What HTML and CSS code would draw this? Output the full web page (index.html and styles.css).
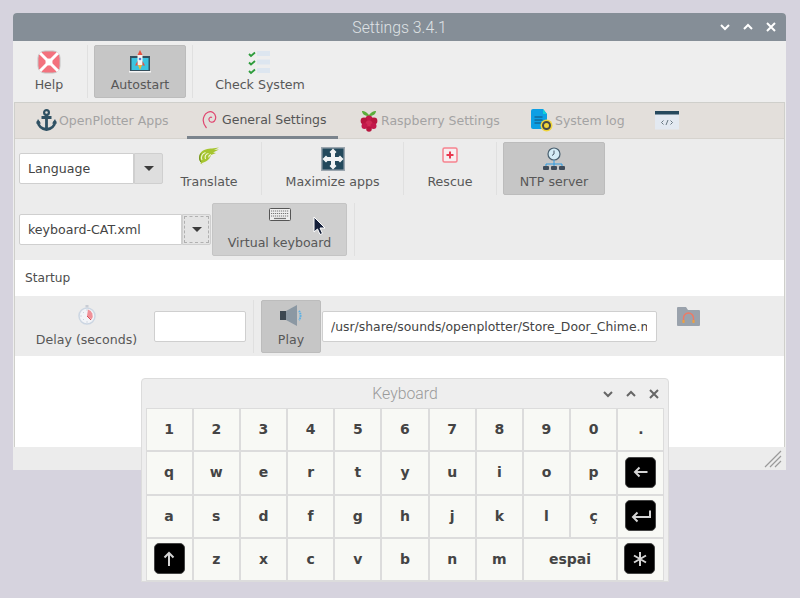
FILE: index.html
```html
<!DOCTYPE html>
<html lang="en">
<head>
  <meta charset="UTF-8">
  <title>Settings 3.4.1</title>
  <link rel="stylesheet" href="styles.css">
</head>
<body>

<div class="window settings-win">
  <div class="titlebar">
    <span class="win-title">Settings 3.4.1</span>
    <div class="win-btns">
      <svg width="12" height="12" viewBox="0 0 12 12"><path d="M2 4l4 4 4-4" /></svg>
      <svg width="12" height="12" viewBox="0 0 12 12"><path d="M2 8l4-4 4 4" /></svg>
      <svg width="12" height="12" viewBox="0 0 12 12"><path d="M2 2l8 8M10 2l-8 8" /></svg>
    </div>
  </div>

  <div class="toolbar">
    <div class="tool w-help">
      <svg width="24" height="24" viewBox="0 0 24 24">
        <rect x="1" y="1" width="22" height="22" rx="7" fill="#f3727e" stroke="#c2c2c2" />
        <path d="M3 3l18 18M21 3L3 21" stroke="#fff" stroke-width="3" />
        <circle cx="12" cy="12" r="3.500" fill="#fff" />
      </svg>
      <span>Help</span>
    </div>
    <div class="sep"></div>
    <div class="tool active w-autostart">
      <svg width="24" height="24" viewBox="0 0 24 24">
        <rect x="2" y="6" width="20" height="15" fill="#35505e" />
        <rect x="3.500" y="8" width="17" height="12" fill="#3cc4e0" />
        <rect x="1" y="21" width="22" height="1.500" fill="#f5f5f5" />
        <path d="M12 0l2.500 5H9.500z" fill="#e8503f" />
        <path d="M9.500 5h5v10h-5z" fill="#f4f4f4" />
        <circle cx="12" cy="9" r="1.300" fill="#5a78c8" />
        <path d="M9.500 11l-2.500 4.500h2.500zM14.500 11l2.500 4.500h-2.500z" fill="#e8503f" />
        <path d="M10 15h4l-2 5z" fill="#f7b733" />
      </svg>
      <span>Autostart</span>
    </div>
    <div class="sep"></div>
    <div class="tool w-check">
      <svg width="24" height="26" viewBox="0 0 24 26">
        <path d="M1 4l2 2 4-3.500M1 12.500l2 2 4-3.500M1 21l2 2 4-3.500" fill="none" stroke="#2d9c3c" stroke-width="1.800" />
        <rect x="9" y="1" width="13" height="5" fill="#dde6f0" />
        <rect x="9" y="9.500" width="13" height="5" fill="#dde6f0" />
        <rect x="9" y="18" width="13" height="5" fill="#dde6f0" />
      </svg>
      <span>Check System</span>
    </div>
  </div>

  <div class="panel">
    <div class="tabs">
      <div class="tab w-tab1">
        <svg width="21" height="23" viewBox="0 0 21 23">
          <circle cx="10.500" cy="3.500" r="2.400" fill="none" stroke="#2f5163" stroke-width="2.200" />
          <path d="M5.500 8.500h10M10.500 5v16M2 12c0 5 4 8 8.500 8.500C15 20 19 17 19 12" fill="none" stroke="#2f5163" stroke-width="2.800" />
          <path d="M0 14.500l2-4.500 3 4.500zM16 14.500L19 10l2 4.500z" fill="#2f5163" />
        </svg>
        <span>OpenPlotter Apps</span>
      </div>
      <div class="tab current w-tab2">
        <svg width="15" height="20" viewBox="0 0 15 20">
          <path d="M4.500 18C1.500 14.500 0.500 10 2 6.500 3.500 2.500 8 0.500 11 2.500c3 2 3.500 6 1.500 8.500-1.800 2-5 1.500-5.500-1 -0.400-2 1.500-3.500 3-2.500" fill="none" stroke="#e0456f" stroke-width="1.200" />
        </svg>
        <span>General Settings</span>
      </div>
      <div class="tab w-tab3">
        <svg width="18" height="22" viewBox="0 0 18 22">
          <path d="M9 5C6 1 3 1 2 1c0 3 3 5 7 5 4 0 7-2 7-5-1 0-4 0-7 4z" fill="#5bae3c" />
          <circle cx="9" cy="9" r="3.600" fill="#c3194b" />
          <circle cx="4" cy="11" r="3.400" fill="#b8163f" />
          <circle cx="14" cy="11" r="3.400" fill="#b8163f" />
          <circle cx="9" cy="14" r="3.600" fill="#d02a55" />
          <circle cx="4.500" cy="16" r="3" fill="#c3194b" />
          <circle cx="13.500" cy="16" r="3" fill="#c3194b" />
          <circle cx="9" cy="19" r="2.800" fill="#b8163f" />
        </svg>
        <span>Raspberry Settings</span>
      </div>
      <div class="tab w-tab4">
        <svg width="22" height="23" viewBox="0 0 22 23">
          <path d="M2 0h10l4 5v15H2a2 2 0 0 1-2-2V2a2 2 0 0 1 2-2z" fill="#0d9fe4" />
          <path d="M12 0l4 5h-4z" fill="#12d2d8" />
          <path d="M3.500 8h8M3.500 11h8M3.500 14h8" stroke="#14507a" stroke-width="1" />
          <circle cx="15.500" cy="16.500" r="6" fill="#f0d53a" />
          <circle cx="15.500" cy="16.500" r="3.500" fill="none" stroke="#46494a" stroke-width="2" />
        </svg>
        <span>System log</span>
      </div>
      <div class="tab w-tab5">
        <svg width="24" height="19" viewBox="0 0 24 19">
          <rect width="24" height="18.500" fill="#e3e9f1" />
          <rect width="24" height="3.500" fill="#26495e" />
          <path d="M8.500 9.500L6.500 11.500l2 2M15.500 9.500l2 2-2 2M13 9l-2 5" fill="none" stroke="#4a5a66" stroke-width="0.800" />
        </svg>
      </div>
    </div>

    <div class="settings-block">
      <div class="row">
        <div class="combo w-lang">
          <div class="combo-text">Language</div>
          <div class="combo-arrow"><i></i></div>
        </div>
        <div class="tool w-translate">
          <svg width="24" height="19" viewBox="0 0 24 19">
            <path d="M6 17.500C2 15 1 10 3.500 6 6 2.500 11 1.500 15 1.500l7-1-5 2.500 5-.5-6 3 3 .5-5 2c-1 4-5 7.500-11 8.500z" fill="#a6c52f" />
            <path d="M5 13c-1.500-3 0-6.500 3.500-7.500M8.500 12c-1-2.500 0-5 3-5.500M12 10.500c-.5-1.500.5-2.500 2-3" fill="none" stroke="#f2f6d8" stroke-width="1.100" />
            <path d="M4 15c-2-2.500-2-6 0-8.500" fill="none" stroke="#6f8f1c" stroke-width="1" />
          </svg>
          <span>Translate</span>
        </div>
        <div class="sep"></div>
        <div class="tool w-maximize">
          <svg width="24" height="24" viewBox="0 0 24 24">
            <rect x="0.750" y="0.750" width="22.500" height="22.500" fill="#23495c" stroke="#9aa5ae" stroke-width="1.500" />
            <path d="M12 1.500l3.500 3.500-1.500 1.500v3.500h3.500L19 8.500l3.500 3.500-3.500 3.500-1.500-1.500H14v3.500l1.500 1.500-3.500 3.500-3.500-3.500L10 17.500V14H6.500L5 15.500 1.500 12 5 8.500 6.500 10H10V6.500L8.500 5z" fill="#f2f4f5" />
          </svg>
          <span>Maximize apps</span>
        </div>
        <div class="sep"></div>
        <div class="tool w-rescue">
          <svg width="16" height="16" viewBox="0 0 16 16">
            <rect x="1" y="1" width="14" height="14" rx="1.500" fill="#f7eef0" stroke="#f6838f" stroke-width="1.500" />
            <path d="M8 4.500v7M4.500 8h7" stroke="#e8384f" stroke-width="2" />
          </svg>
          <span>Rescue</span>
        </div>
        <div class="sep"></div>
        <div class="tool active w-ntp">
          <svg width="22" height="23" viewBox="0 0 22 23">
            <circle cx="11" cy="7" r="6" fill="#d4ecf6" stroke="#4a6070" stroke-width="1.200" />
            <path d="M11 3.500V7l-2 1.500" fill="none" stroke="#3a4a58" stroke-width="0.900" />
            <path d="M11 13v4M3 20v-3h16v3M11 17v3" fill="none" stroke="#2f9be0" stroke-width="1" />
            <rect x="0" y="19" width="6" height="4" rx="1" fill="#3f4c5a" />
            <rect x="8" y="19" width="6" height="4" rx="1" fill="#3f4c5a" />
            <rect x="16" y="19" width="6" height="4" rx="1" fill="#3f4c5a" />
          </svg>
          <span>NTP server</span>
        </div>
      </div>

      <div class="row">
        <div class="combo w-layout">
          <div class="combo-text">keyboard-CAT.xml</div>
          <div class="combo-arrow focused"><i></i></div>
        </div>
        <div class="tool hover w-virtual">
          <svg width="22" height="13" viewBox="0 0 22 13">
            <rect x="0.500" y="0.500" width="21" height="12" rx="1" fill="#eee" stroke="#555" />
            <path d="M2 3h18M2 5.500h18M2 8h18" stroke="#777" stroke-width="1.200" stroke-dasharray="1.200 0.800" />
            <path d="M5 10.500h12" stroke="#777" stroke-width="1.200" />
          </svg>
          <span>Virtual keyboard</span>
        </div>
        <div class="sep"></div>
      </div>
    </div>

    <div class="section-label">Startup</div>

    <div class="row startup-row">
      <div class="tool w-delay">
        <svg width="20" height="20" viewBox="0 0 20 20">
          <path d="M8.500 0h3v2.500h-3z" fill="#c8ccd4" />
          <circle cx="10" cy="11" r="8" fill="#f2f4f8" stroke="#ccd6e2" stroke-width="1.500" />
          <path d="M10 11l1-6.500a6.500 6.500 0 0 1 3.500 10z" fill="#f09098" />
          <path d="M10 11l4 4" stroke="#d84a56" stroke-width="1" />
          <path d="M10 4.500v1M3.500 11h1M10 16.500v1M6 7l.6.600M6 15l.6-.600" stroke="#9aa8b8" stroke-width="0.700" />
        </svg>
        <span>Delay (seconds)</span>
      </div>
      <input class="field w-seconds" type="text">
      <div class="sep"></div>
      <div class="tool active w-play">
        <svg width="24" height="22" viewBox="0 0 24 22">
          <path d="M1 6h6v9H1z" fill="#3c4852" />
          <path d="M7 6l11-6v21L7 15z" fill="#8b98a3" />
          <path d="M20 6c2 2 2 7 0 9" fill="none" stroke="#5bb0e4" stroke-width="2" stroke-dasharray="1.500 0.700" />
        </svg>
        <span>Play</span>
      </div>
      <input class="field w-path" type="text" value="/usr/share/sounds/openplotter/Store_Door_Chime.mp3">
      <svg class="folder" width="23" height="19" viewBox="0 0 23 19">
        <path d="M0 1a1 1 0 0 1 1-1h8l2 3h11a1 1 0 0 1 1 1v14a1 1 0 0 1-1 1H1a1 1 0 0 1-1-1z" fill="#9aa2ac" />
        <path d="M6.500 15V11a5 5 0 0 1 10 0v4" fill="none" stroke="#ee7a64" stroke-width="1.400" />
        <path d="M5.500 13h2v3h-2zM15.500 13h2v3h-2z" fill="#f0a23c" />
      </svg>
    </div>

    <div class="empty"></div>
  </div>

  <div class="statusbar">
    <svg width="18" height="18" viewBox="0 0 18 18">
      <path d="M17 1L1 17M17 6L6 17M17 11l-6 6" stroke="#9a9a9a" stroke-width="1.200" />
    </svg>
  </div>
</div>

<svg class="pointer" width="14" height="20" viewBox="0 0 14 20">
  <path d="M1 1v15l3.500-3 2.500 5.500 2.500-1-2.500-5.500h5z" fill="#15203a" stroke="#fff" stroke-width="1" />
</svg>

<div class="window keyboard-win">
  <div class="kb-title">
    <span class="win-title">Keyboard</span>
    <div class="win-btns">
      <svg width="12" height="12" viewBox="0 0 12 12"><path d="M2 4l4 4 4-4" /></svg>
      <svg width="12" height="12" viewBox="0 0 12 12"><path d="M2 8l4-4 4 4" /></svg>
      <svg width="12" height="12" viewBox="0 0 12 12"><path d="M2 2l8 8M10 2l-8 8" /></svg>
    </div>
  </div>
  <div class="keys">
    <div class="key">1</div><div class="key">2</div><div class="key">3</div><div class="key">4</div><div class="key">5</div><div class="key">6</div><div class="key">7</div><div class="key">8</div><div class="key">9</div><div class="key">0</div><div class="key">.</div>
    <div class="key">q</div><div class="key">w</div><div class="key">e</div><div class="key">r</div><div class="key">t</div><div class="key">y</div><div class="key">u</div><div class="key">i</div><div class="key">o</div><div class="key">p</div>
    <div class="key"><div class="key-cap"><svg width="18" height="16" viewBox="0 0 18 16"><path d="M15.500 8H3M7.500 3.500L3 8l4.500 4.500" /></svg></div></div>
    <div class="key">a</div><div class="key">s</div><div class="key">d</div><div class="key">f</div><div class="key">g</div><div class="key">h</div><div class="key">j</div><div class="key">k</div><div class="key">l</div><div class="key">ç</div>
    <div class="key"><div class="key-cap"><svg width="22" height="16" viewBox="0 0 22 16"><path d="M20 2.500V9H3M7.500 4.500L3 9l4.500 4.500" /></svg></div></div>
    <div class="key"><div class="key-cap"><svg width="16" height="18" viewBox="0 0 16 18"><path d="M8 16V3M3.500 7.500L8 3l4.500 4.500" /></svg></div></div>
    <div class="key">z</div><div class="key">x</div><div class="key">c</div><div class="key">v</div><div class="key">b</div><div class="key">n</div><div class="key">m</div>
    <div class="key span-2">espai</div>
    <div class="key shift-left"><div class="key-cap"><svg width="18" height="18" viewBox="0 0 18 18"><path d="M9 2v14M3 5.500l12 7M15 5.500l-12 7" /></svg></div></div>
  </div>
</div>

</body>
</html>
```

FILE: styles.css
```css
* {
  box-sizing: border-box;
}

body {
  margin: 0;
  height: 598px;
  overflow: hidden;
  background: #d6d3de;
  font-family: "DejaVu Sans", sans-serif;
  font-size: 12.6px;
  color: #585858;
}

svg {
  display: block;
  flex: none;
}

/* windows sit on the desktop */
.window {
  position: absolute;
  display: flex;
  flex-direction: column;
  background: #eee;
  border-radius: 4px 4px 0 0;
}

.settings-win {
  left: 13px;
  top: 13px;
  width: 773px;
  height: 457px;
}

.keyboard-win {
  left: 141px;
  top: 378px;
  width: 528px;
  height: 204px;
  border: 1px solid #dcdcdc;
  border-radius: 4px 4px 0 0;
}

.pointer {
  position: absolute;
  left: 313px;
  top: 216px;
}

.titlebar {
  position: relative;
  height: 28px;
  display: flex;
  align-items: center;
  justify-content: center;
  background: #858e97;
  border-radius: 4px 4px 0 0;
  color: #dfe2e5;
}

.win-title {
  font-family: Roboto, sans-serif;
  font-weight: 300;
  font-size: 15.800px;
}

.win-btns {
  position: absolute;
  right: 9px;
  top: 0;
  bottom: 0;
  display: flex;
  align-items: center;
  gap: 11px;
}

.win-btns svg path {
  fill: none;
  stroke: currentColor;
  stroke-width: 2;
}

.titlebar .win-btns {
  color: #fff;
}

.toolbar {
  height: 61px;
  display: flex;
  align-items: center;
  gap: 6px;
  padding-left: 4px;
}

.tool {
  height: 53px;
  flex: none;
  display: flex;
  flex-direction: column;
  align-items: center;
  justify-content: flex-start;
  border: 1px solid transparent;
  border-radius: 2px;
  position: relative;
  white-space: nowrap;
}

.tool svg {
  position: absolute;
  top: 4px;
}

.tool span {
  position: absolute;
  bottom: 4px;
  line-height: 16px;
}

.tool.active {
  background: #c6c6c6;
  border-color: #bcbcbc;
}

.tool.hover {
  background: #cfcfcf;
  border-color: #c4c4c4;
}

.sep {
  width: 1px;
  height: 53px;
  flex: none;
  background: #e0e0e0;
}

.w-help { width: 64px; }
.w-autostart { width: 92px; }
.w-check { width: 122px; }
.w-translate { width: 80px; margin-right: 6px; }
.w-maximize { width: 129px; }
.w-rescue { width: 80px; }
.w-ntp { width: 102px; }
.w-virtual { width: 135px; margin-right: 1px; }

.panel {
  flex: 1;
  display: flex;
  flex-direction: column;
  margin: 0 1px 0 1px;
  background: #fff;
  border: 1px solid #cfcfcb;
  border-width: 1px 1px 0 1px;
  min-height: 0;
}

.tabs {
  height: 36px;
  display: flex;
  background: #e3dfdb;
  border-bottom: 1px solid #d6d3ce;
  flex: none;
  font-size: 12.500px;
}

.tab {
  display: flex;
  align-items: center;
  flex: none;
  height: 35px;
  color: #a3a3a3;
  white-space: nowrap;
}

.tab.current {
  color: #555;
  border-bottom: 3px solid #7b848d;
  height: 36px;
}

.w-tab1 { width: 172px; padding-left: 21px; gap: 2px; }
.w-tab2 { width: 151px; padding-left: 15px; gap: 5px; }
.w-tab3 { width: 193px; padding-left: 22px; gap: 3px; }
.w-tab4 { width: 124px; padding-left: 0; gap: 2px; }
.w-tab5 { width: 30px; }

.settings-block {
  background: #ececec;
  padding: 3px 0 4px 4px;
  flex: none;
}

.row {
  display: flex;
  align-items: center;
  gap: 6px;
  background: #ececec;
}

.row + .row {
  margin-top: 8px;
}

.combo {
  display: flex;
  flex: none;
  height: 31px;
}

.w-lang { width: 144px; }
.w-layout { width: 192px; margin-right: -5px; }

.combo-text {
  flex: 1;
  background: #fff;
  border: 1px solid #cfcfcf;
  border-radius: 2px 0 0 2px;
  padding-left: 8px;
  line-height: 29px;
  color: #444;
}

.combo-arrow {
  width: 29px;
  display: flex;
  align-items: center;
  justify-content: center;
  background: #dedede;
  border: 1px solid #cfcfcf;
  border-radius: 0 2px 2px 0;
}

.combo-arrow i {
  width: 0;
  height: 0;
  border-left: 5px solid transparent;
  border-right: 5px solid transparent;
  border-top: 5px solid #3c3c3c;
}

.combo-arrow.focused {
  background: #e4e4e4;
  outline: 1px dashed #b0b0b0;
  outline-offset: -3px;
}

.section-label {
  height: 36px;
  flex: none;
  line-height: 36px;
  padding-left: 10px;
  font-size: 12.200px;
  color: #4d4d4d;
  background: #fff;
}

.startup-row {
  height: 60px;
  flex: none;
  gap: 0;
  padding-left: 4px;
}

.w-delay { width: 135px; }
.w-play { width: 60px; }

.startup-row .sep {
  margin: 0 7px;
}

.field {
  height: 31px;
  flex: none;
  background: #fff;
  border: 1px solid #cfcfcf;
  border-radius: 2px;
  padding: 0 9px 0 8px;
  font: inherit;
  font-size: 12.400px;
  color: #444;
  outline: none;
}

.w-seconds { width: 92px; }
.w-path { width: 335px; margin-left: 1px; }

.folder {
  margin: -20px 0 0 20px;
}

.empty {
  flex: 1;
  background: #fff;
}

.statusbar {
  height: 23px;
  flex: none;
  display: flex;
  justify-content: flex-end;
  align-items: flex-end;
  padding: 0 4px 2px 0;
  background: #ececec;
}

.kb-title {
  position: relative;
  height: 29px;
  flex: none;
  display: flex;
  align-items: center;
  justify-content: center;
  color: #9a9a9a;
}

.kb-title .win-btns {
  right: 8px;
  color: #666;
}

.keys {
  margin-left: 3.500px;
  width: 519px;
  display: grid;
  grid-template-columns: repeat(11, 47.180px);
  grid-auto-rows: 43.250px;
}

.key {
  display: flex;
  align-items: center;
  justify-content: center;
  background: #f8f9f5;
  border: 1px solid #dcdcdc;
  font-weight: bold;
  font-size: 14px;
  color: #444;
  padding-bottom: 1px;
}

.key.span-2 {
  grid-column: span 2;
}

.key.shift-left {
  padding-right: 2px;
}

.key-cap {
  width: 31px;
  height: 31px;
  display: flex;
  align-items: center;
  justify-content: center;
  background: #000;
  border: 1px solid #444;
  border-radius: 5px;
}

.key-cap svg path {
  fill: none;
  stroke: #d4d4d4;
  stroke-width: 2;
}
```
